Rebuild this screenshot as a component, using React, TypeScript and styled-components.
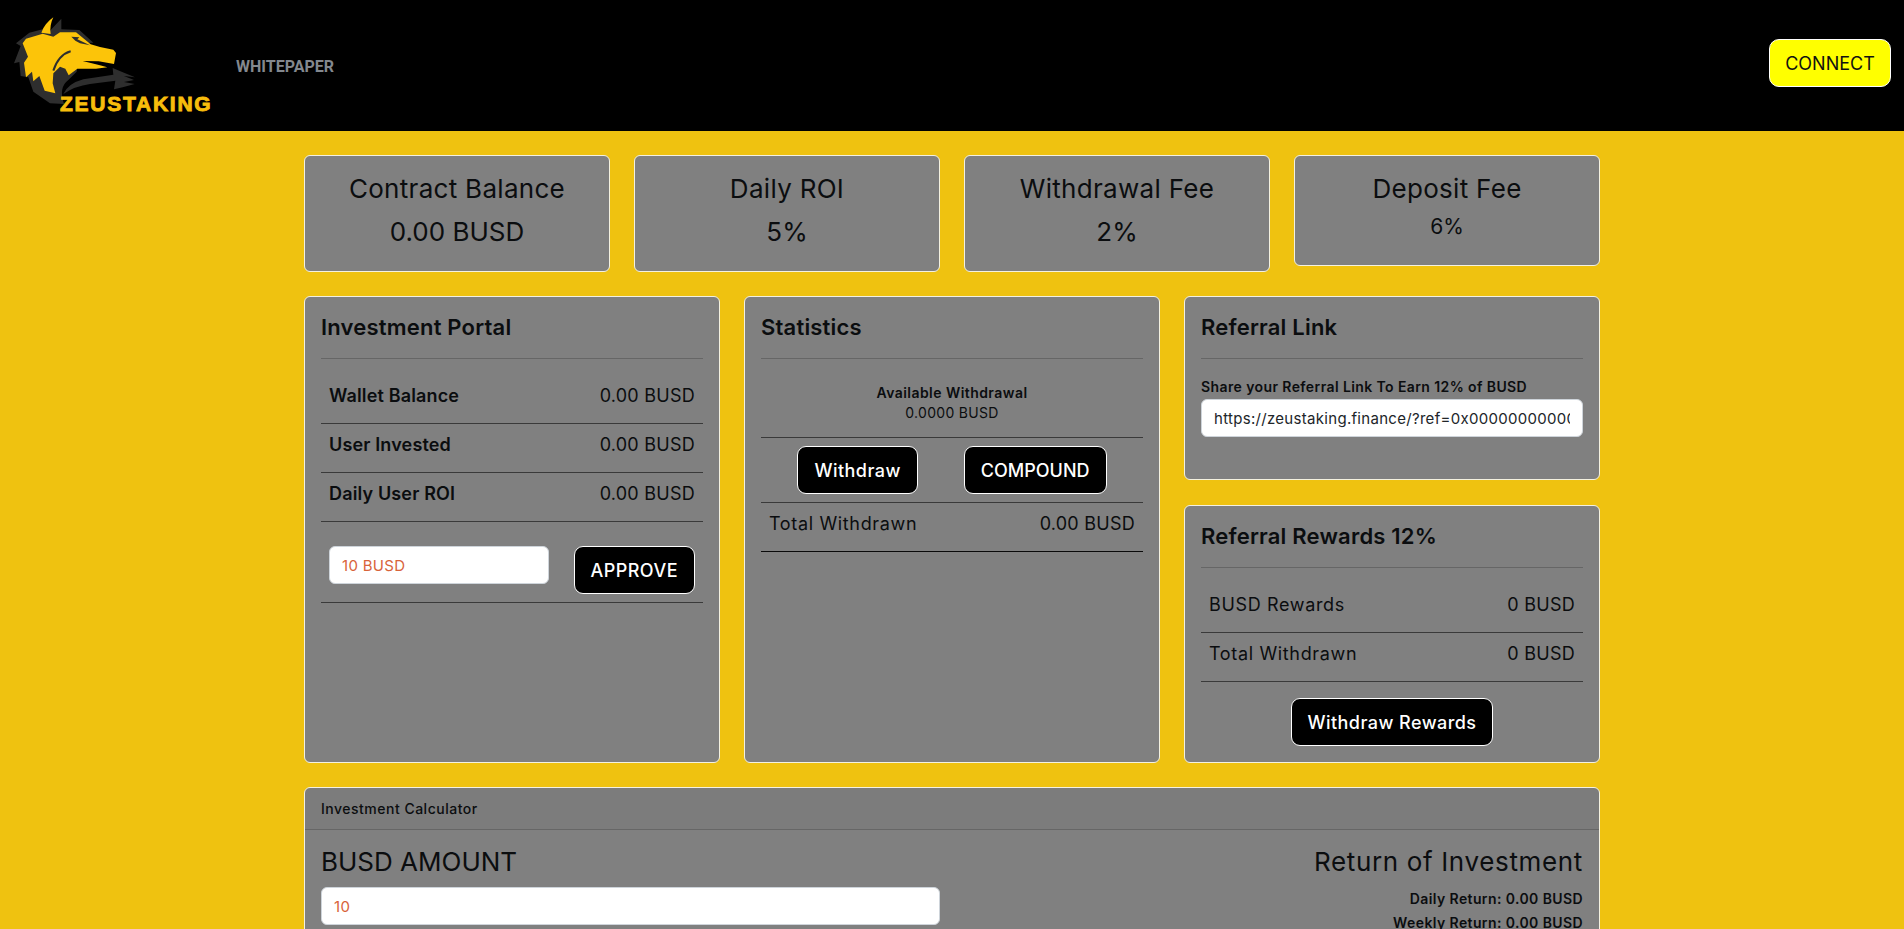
import styled, { createGlobalStyle } from "styled-components";

const GlobalStyle = createGlobalStyle`
  * { box-sizing: border-box; }
  html, body { margin: 0; padding: 0; height: 100%; overflow: hidden; }
  body {
    background-color: #efc210;
    color: #0b0d0f;
    font-family: Inter, "Noto Sans", sans-serif;
    font-size: 16px;
  }
`;

const Page = styled.div`
  height: 100vh;
  overflow: hidden;
  display: flex;
  flex-direction: column;
`;

const Header = styled.header`
  height: 131px;
  flex: none;
  background-color: #000;
  display: flex;
  align-items: center;
  padding-right: 13px;
`;

const LogoWrap = styled.div`
  position: relative;
  width: 230px;
  height: 125px;
  align-self: flex-start;
  flex: none;
`;

const LogoText = styled.span`
  position: absolute;
  left: 60px;
  top: 92px;
  font-family: "Liberation Sans", Arial, sans-serif;
  font-weight: 700;
  font-size: 21px;
  line-height: 24px;
  letter-spacing: 1.75px;
  color: #f7bd0c;
  -webkit-text-stroke: 0.9px #f7bd0c;
  white-space: nowrap;
`;

const NavLink = styled.a`
  margin-left: 6px;
  margin-top: 1px;
  font-family: Roboto, sans-serif;
  font-size: 16px;
  font-weight: 700;
  color: #83888e;
`;

const ConnectButton = styled.button`
  margin-left: auto;
  margin-top: -5px;
  height: 48px;
  width: 122px;
  background-color: #ffff00;
  border: 1px solid #fff;
  border-radius: 10px;
  color: #111;
  font-family: inherit;
  font-size: 18px;
  padding: 0;
`;

const Container = styled.main`
  width: 1296px;
  margin: 0 auto;
  padding-top: 24px;
`;

const StatRow = styled.div`
  display: flex;
  gap: 24px;
  align-items: flex-start;
`;

const Card = styled.div`
  background-color: #808080;
  border: 1px solid #f4f1e0;
  border-radius: 6px;
`;

const StatCard = styled(Card)`
  flex: 1;
  padding: 16px;
  text-align: center;
`;

const StatTitle = styled.div`
  font-size: 26px;
  line-height: 34px;
  letter-spacing: 0.3px;
  margin-bottom: 9px;
`;

const StatValue = styled.div<{ $small?: boolean }>`
  font-size: ${({ $small }) => ($small ? "21px" : "26px")};
  line-height: ${({ $small }) => ($small ? "24px" : "34px")};
  margin-bottom: ${({ $small }) => ($small ? "10px" : "6px")};
`;

const PanelGrid = styled.div`
  display: grid;
  grid-template-columns: repeat(3, 416px);
  gap: 24px;
  height: 467px;
  margin-top: 24px;
`;

const Panel = styled(Card)`
  padding: 16px;
`;

const SideColumn = styled.div`
  display: flex;
  flex-direction: column;
  justify-content: space-between;
`;

const PanelTitle = styled.div`
  font-size: 22px;
  line-height: 28px;
  font-weight: 600;
  letter-spacing: 0.2px;
  padding-bottom: 17px;
  border-bottom: 1px solid #666;
  margin-bottom: 16px;
`;

const DataRow = styled.div<{ $dark?: boolean }>`
  display: flex;
  justify-content: space-between;
  padding: 7px 8px 13px 8px;
  line-height: 28px;
  font-size: 18px;
  border-bottom: 1px solid ${({ $dark }) => ($dark ? "#0a0a0a" : "#3a3a3a")};
`;

const RowLabel = styled.span<{ $bold?: boolean }>`
  font-weight: ${({ $bold }) => ($bold ? 600 : 400)};
  letter-spacing: ${({ $bold }) => ($bold ? "0.15px" : "0.65px")};
`;

const RowValue = styled.span`
  letter-spacing: 0.25px;
`;

const ActionRow = styled.div`
  display: flex;
  justify-content: space-between;
  align-items: flex-start;
  padding: 24px 8px 8px 8px;
  border-bottom: 1px solid #3a3a3a;
`;

const TextInput = styled.input<{ $accent?: boolean }>`
  display: block;
  height: 38px;
  width: 100%;
  background-color: #fff;
  border: 1px solid #ced4da;
  border-radius: 6px;
  padding: 0 12px;
  font-family: inherit;
  font-size: 15px;
  letter-spacing: 0.3px;
  color: ${({ $accent }) => ($accent ? "#d8633a" : "#212529")};
  outline: none;
`;

const AmountInput = styled(TextInput)`
  width: 220px;
`;

const ActionButton = styled.button`
  height: 48px;
  padding: 0 16px;
  background-color: #000;
  border: 1px solid #fff;
  border-radius: 9px;
  color: #fff;
  font-family: inherit;
  font-size: 18px;
  font-weight: 500;
  letter-spacing: 0.45px;
  white-space: nowrap;
`;

const CompoundButton = styled(ActionButton)`
  letter-spacing: 0;
`;

const AvailableBlock = styled.div`
  margin-top: 24px;
  padding-bottom: 14px;
  text-align: center;
  font-size: 14px;
  line-height: 20px;
  letter-spacing: 0.3px;
  border-bottom: 1px solid #3a3a3a;
`;

const AvailableLabel = styled.div`
  font-weight: 600;
  letter-spacing: 0.45px;
`;

const ButtonRow = styled.div`
  display: flex;
  justify-content: center;
  gap: 46px;
  padding: 8px 0;
  border-bottom: 1px solid #3a3a3a;
`;

const ShareLabel = styled.div`
  margin-top: 18px;
  margin-bottom: 2px;
  font-size: 14px;
  line-height: 20px;
  font-weight: 600;
  letter-spacing: 0.4px;
`;

const LinkField = styled.div`
  margin-bottom: 26px;
`;

const CenteredAction = styled.div`
  display: flex;
  justify-content: center;
  margin-top: 16px;
`;

const CalcCard = styled(Card)`
  margin-top: 24px;
  height: 400px;
  overflow: hidden;
`;

const CalcHeader = styled.div`
  height: 42px;
  padding: 0 16px;
  display: flex;
  align-items: center;
  font-size: 14px;
  font-weight: 500;
  letter-spacing: 0.5px;
  background-color: rgba(0, 0, 0, 0.03);
  border-bottom: 1px solid #666;
`;

const CalcBody = styled.div`
  display: flex;
  justify-content: space-between;
  padding: 16px;
`;

const CalcColumn = styled.div`
  width: 619px;
`;

const CalcResult = styled.div`
  text-align: right;
`;

const CalcHeading = styled.div`
  font-size: 26px;
  line-height: 32px;
  margin-bottom: 9px;
`;

const ReturnHeading = styled(CalcHeading)`
  letter-spacing: 0.65px;
`;

const CalcLine = styled.div`
  font-size: 14px;
  font-weight: 600;
  line-height: 24px;
  letter-spacing: 0.4px;
`;

function WolfLogo() {
  return (
    <svg width="230" height="125" viewBox="0 0 690 375" fill="none">
      {/* dark mane and jaw shadow */}
      <path
        fill="#2e2e2e"
        d="M88 98 L128 88 L150 92 L184 56 L184 88 L238 90 L280 128 L240 130 L230 215 L205 240 Q175 262 192 312 L150 310 L100 275 L85 232 L62 228 L58 186 L42 190 L62 138 L48 130 Z"
      />
      {/* trident */}
      <path
        fill="#2e2e2e"
        d="M190 282 Q205 250 250 238 L340 224 L338 204 L372 218 L405 232 L372 228 L402 240 L372 246 L404 252 L368 262 L342 268 L346 242 L270 252 Q225 258 190 282 Z"
      />
      {/* ear */}
      <path fill="#fcc409" d="M124 98 Q134 70 160 52 Q148 76 152 102 Z" />
      {/* head */}
      <path
        fill="#fcc409"
        d="M78 116 L128 101 L160 110 L180 97 L228 97 L272 133 L300 141 L340 149 L348 159 L342 192 L296 184 L248 183 L300 196 L322 202 L288 206 L232 206 L206 226 L196 206 L180 200 L160 220 L158 250 L166 280 L134 272 L118 228 L100 244 L96 215 L78 232 L72 188 L84 170 L68 130 Z"
      />
      {/* brow */}
      <path fill="#2e2e2e" d="M214 110 L238 112 L232 118 L270 136 L240 130 L226 122 Z" />
      {/* cheek fold */}
      <path stroke="#2e2e2e" strokeWidth="6" d="M212 154 Q176 164 160 212" />
    </svg>
  );
}

export default function App() {
  return (
    <Page>
      <GlobalStyle />
      <Header>
        <LogoWrap>
          <WolfLogo />
          <LogoText>ZEUSTAKING</LogoText>
        </LogoWrap>
        <NavLink>WHITEPAPER</NavLink>
        <ConnectButton>CONNECT</ConnectButton>
      </Header>
      <Container>
        <StatRow>
          <StatCard>
            <StatTitle>Contract Balance</StatTitle>
            <StatValue>0.00 BUSD</StatValue>
          </StatCard>
          <StatCard>
            <StatTitle>Daily ROI</StatTitle>
            <StatValue>5%</StatValue>
          </StatCard>
          <StatCard>
            <StatTitle>Withdrawal Fee</StatTitle>
            <StatValue>2%</StatValue>
          </StatCard>
          <StatCard>
            <StatTitle>Deposit Fee</StatTitle>
            <StatValue $small>6%</StatValue>
          </StatCard>
        </StatRow>

        <PanelGrid>
          <Panel>
            <PanelTitle>Investment Portal</PanelTitle>
            <DataRow>
              <RowLabel $bold>Wallet Balance</RowLabel>
              <RowValue>0.00 BUSD</RowValue>
            </DataRow>
            <DataRow>
              <RowLabel $bold>User Invested</RowLabel>
              <RowValue>0.00 BUSD</RowValue>
            </DataRow>
            <DataRow>
              <RowLabel $bold>Daily User ROI</RowLabel>
              <RowValue>0.00 BUSD</RowValue>
            </DataRow>
            <ActionRow>
              <AmountInput $accent defaultValue="10 BUSD" />
              <ActionButton>APPROVE</ActionButton>
            </ActionRow>
          </Panel>

          <Panel>
            <PanelTitle>Statistics</PanelTitle>
            <AvailableBlock>
              <AvailableLabel>Available Withdrawal</AvailableLabel>
              <div>0.0000 BUSD</div>
            </AvailableBlock>
            <ButtonRow>
              <ActionButton>Withdraw</ActionButton>
              <CompoundButton>COMPOUND</CompoundButton>
            </ButtonRow>
            <DataRow $dark>
              <RowLabel>Total Withdrawn</RowLabel>
              <RowValue>0.00 BUSD</RowValue>
            </DataRow>
          </Panel>

          <SideColumn>
            <Panel>
              <PanelTitle>Referral Link</PanelTitle>
              <ShareLabel>Share your Referral Link To Earn 12% of BUSD</ShareLabel>
              <LinkField>
                <TextInput defaultValue="https://zeustaking.finance/?ref=0x0000000000000000000000000000000000000000" />
              </LinkField>
            </Panel>
            <Panel>
              <PanelTitle>Referral Rewards 12%</PanelTitle>
              <DataRow>
                <RowLabel>BUSD Rewards</RowLabel>
                <RowValue>0 BUSD</RowValue>
              </DataRow>
              <DataRow>
                <RowLabel>Total Withdrawn</RowLabel>
                <RowValue>0 BUSD</RowValue>
              </DataRow>
              <CenteredAction>
                <ActionButton>Withdraw Rewards</ActionButton>
              </CenteredAction>
            </Panel>
          </SideColumn>
        </PanelGrid>

        <CalcCard>
          <CalcHeader>Investment Calculator</CalcHeader>
          <CalcBody>
            <CalcColumn>
              <CalcHeading>BUSD AMOUNT</CalcHeading>
              <TextInput $accent defaultValue="10" />
            </CalcColumn>
            <CalcResult>
              <ReturnHeading>Return of Investment</ReturnHeading>
              <CalcLine>Daily Return: 0.00 BUSD</CalcLine>
              <CalcLine>Weekly Return: 0.00 BUSD</CalcLine>
            </CalcResult>
          </CalcBody>
        </CalcCard>
      </Container>
    </Page>
  );
}
